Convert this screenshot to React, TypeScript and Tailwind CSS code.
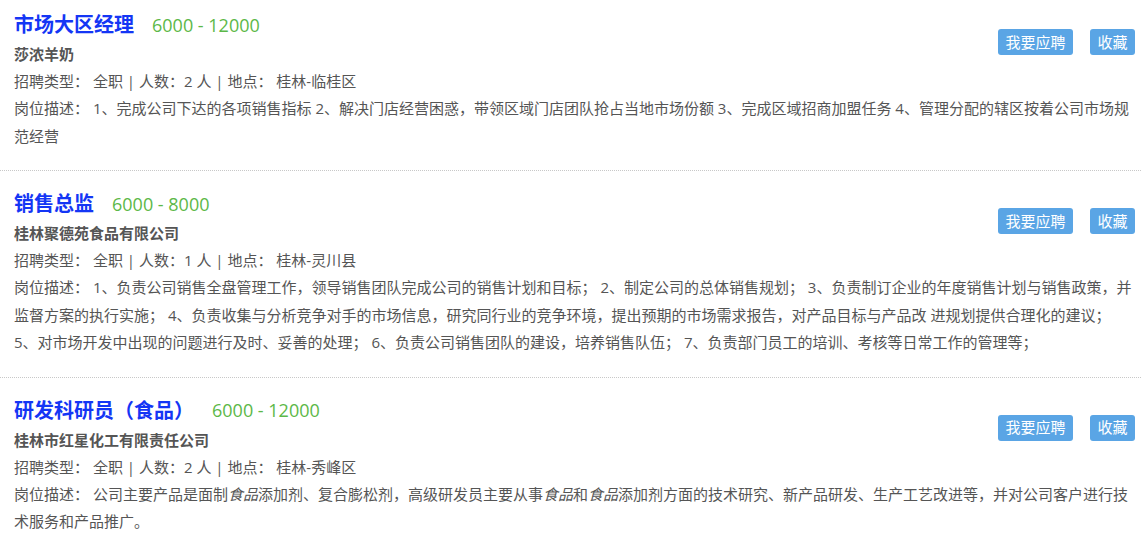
import React from 'react';

type Job = {
  title: string;
  salary: string;
  company: string;
  count: number;
  location: string;
  desc: React.ReactNode;
};

const jobs: Job[] = [
  {
    title: '市场大区经理',
    salary: '6000 - 12000',
    company: '莎浓羊奶',
    count: 2,
    location: '桂林-临桂区',
    desc: '1、完成公司下达的各项销售指标 2、解决门店经营困惑，带领区域门店团队抢占当地市场份额 3、完成区域招商加盟任务 4、管理分配的辖区按着公司市场规范经营',
  },
  {
    title: '销售总监',
    salary: '6000 - 8000',
    company: '桂林聚德苑食品有限公司',
    count: 1,
    location: '桂林-灵川县',
    desc: '1、负责公司销售全盘管理工作，领导销售团队完成公司的销售计划和目标； 2、制定公司的总体销售规划； 3、负责制订企业的年度销售计划与销售政策，并监督方案的执行实施； 4、负责收集与分析竞争对手的市场信息，研究同行业的竞争环境，提出预期的市场需求报告，对产品目标与产品改 进规划提供合理化的建议； 5、对市场开发中出现的问题进行及时、妥善的处理； 6、负责公司销售团队的建设，培养销售队伍； 7、负责部门员工的培训、考核等日常工作的管理等；',
  },
  {
    title: '研发科研员（食品）',
    salary: '6000 - 12000',
    company: '桂林市红星化工有限责任公司',
    count: 2,
    location: '桂林-秀峰区',
    desc: (
      <>
        公司主要产品是面制<em>食品</em>添加剂、复合膨松剂，高级研发员主要从事<em>食品</em>和<em>食品</em>添加剂方面的技术研究、新产品研发、生产工艺改进等，并对公司客户进行技术服务和产品推广。
      </>
    ),
  },
];

function JobItem({ job, first }: { job: Job; first: boolean }) {
  return (
    <div className={`${first ? 'pt-[10px]' : 'pt-[18px]'} pb-[20px] pl-[14px] pr-[6px] border-b border-dotted border-[#c8c8c8]`}>
      <div className="flex justify-between items-start">
        <div>
          <div className="flex items-center h-[30px]">
            <span className="text-[20px] font-bold text-[#1436f5]">{job.title}</span>
            <span className="ml-[18px] text-[18px] text-[#5cb848]">{job.salary}</span>
          </div>
          <div className="leading-[28px] font-bold text-[#555]">{job.company}</div>
          <div className="leading-[27px]">
            招聘类型： 全职 | 人数：{job.count} 人 | 地点： {job.location}
          </div>
        </div>
        <div className="flex gap-[17px] mt-[19px]">
          <button className="h-[26px] w-[75px] rounded-[3px] bg-[#5aa5e5] text-white text-[15px]">我要应聘</button>
          <button className="h-[26px] w-[45px] rounded-[3px] bg-[#5aa5e5] text-white text-[15px]">收藏</button>
        </div>
      </div>
      <div className="leading-[27.5px]">岗位描述： {job.desc}</div>
    </div>
  );
}

export default function App() {
  return (
    <div
      className="w-[1141px] bg-white text-[15px] text-[#555]"
      style={{ fontFamily: '"Open Sans", "Noto Sans CJK SC", sans-serif' }}
    >
      {jobs.map((job, i) => (
        <JobItem key={i} job={job} first={i === 0} />
      ))}
    </div>
  );
}
